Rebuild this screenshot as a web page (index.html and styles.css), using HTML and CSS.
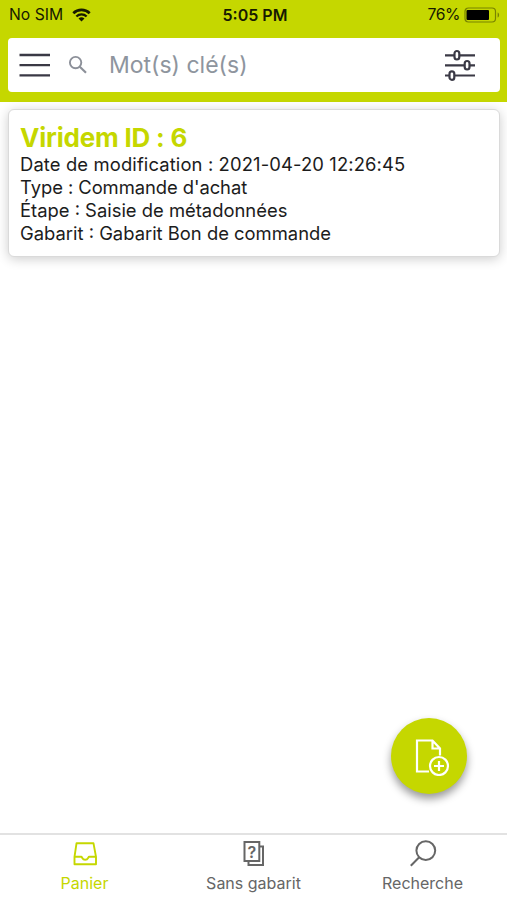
FILE: index.html
```html
<!DOCTYPE html>
<html lang="fr">
<head>
    <meta charset="utf-8">
    <meta name="viewport" content="width=device-width, initial-scale=1">
    <title>Viridem</title>
    <link rel="stylesheet" href="styles.css">
</head>
<body>
    <header class="header">
        <div class="status">
            <div class="status-left">
                <span class="carrier">No SIM</span>
                <svg class="wifi" width="19" height="14" viewBox="0 0 19 14">
                    <path d="M1.3 5.2a11.8 11.8 0 0 1 16.4 0" fill="none" stroke="#171a00" stroke-width="2.7"/>
                    <path d="M4.4 8.5a7.3 7.3 0 0 1 10.2 0" fill="none" stroke="#171a00" stroke-width="2.4"/>
                    <path d="M6.5 10.6a4.3 4.3 0 0 1 6 0l-3 3z" fill="#171a00"/>
                </svg>
            </div>
            <span class="time">5:05 PM</span>
            <div class="status-right">
                <span class="percent">76%</span>
                <svg class="battery" width="37" height="16" viewBox="0 0 37 16">
                    <rect x="1" y="1" width="30.5" height="14" rx="3.5" fill="none" stroke="#788300" stroke-width="1.2"/>
                    <rect x="2.500" y="3" width="22.500" height="10" rx="1" fill="#000"/>
                    <path d="M33.6 5.5c2 .5 2 4.5 0 5z" fill="#788300"/>
                </svg>
            </div>
        </div>
        <div class="search-bar">
            <svg class="menu-icon" width="32" height="26" viewBox="0 0 32 26">
                <path d="M.5 3h30.500M.5 13.200h30.500M.5 23.300h30.500" stroke="#3a3945" stroke-width="2.300"/>
            </svg>
            <svg class="search-icon" width="20" height="20" viewBox="0 0 20 20" fill="none" stroke="#8c9099">
                <circle cx="7.600" cy="7.600" r="5.700" stroke-width="1.900"/>
                <path d="M11.800 11.800l6.200 5.900" stroke-width="2.200"/>
            </svg>
            <input class="search-input" type="text" placeholder="Mot(s) clé(s)">
            <svg class="filter-icon" width="32" height="32" viewBox="0 0 32 32" stroke="#3a3945" stroke-width="2.200">
                <path d="M1 6.300h30M1 16.300h30M1 26.500h30"/>
                <g fill="#fff">
                    <rect x="10.500" y="2" width="4.800" height="8.500" rx="2.400"/>
                    <rect x="20.700" y="12" width="4.800" height="8.500" rx="2.400"/>
                    <rect x="5.500" y="22.300" width="4.800" height="8.500" rx="2.400"/>
                </g>
            </svg>
        </div>
    </header>

    <main class="content">
        <article class="card">
            <h2 class="card-title">Viridem ID : 6</h2>
            <p class="line-date">Date de modification : 2021-04-20 12:26:45</p>
            <p class="line-type">Type : Commande d'achat</p>
            <p class="line-step">Étape : Saisie de métadonnées</p>
            <p class="line-template">Gabarit : Gabarit Bon de commande</p>
        </article>
    </main>

    <button class="add-button" aria-label="Ajouter">
        <svg width="36" height="38" viewBox="0 0 36 38" fill="none" stroke="#fff" stroke-width="2.200">
            <path d="M15 33.500H3V2.500h15.500l7.500 8v7M18.500 2.500v8H26"/>
            <circle cx="25" cy="28" r="9" fill="#c5d700"/>
            <path d="M25 23v10M20 28h10"/>
        </svg>
    </button>

    <nav class="tabs">
        <a class="tab active">
            <svg width="28" height="28" viewBox="0 0 28 28" fill="none" stroke="currentColor" stroke-width="1.900" stroke-linejoin="round">
                <path d="M5.500 4.300h17l2.500 13.500v7.500H3.500v-7.500z"/>
                <path d="M3.500 17.800h6.800c1 0 .8 3 3.900 3s2.900-3 3.900-3H25"/>
            </svg>
            <span class="label">Panier</span>
        </a>
        <a class="tab">
            <svg width="28" height="28" viewBox="0 0 28 28" fill="none" stroke="currentColor" stroke-width="2">
                <path d="M19.500 7.500H23v18.500H8.500v-4"/>
                <rect x="4.500" y="3" width="14.800" height="19"/>
                <text class="question" x="11.900" y="18.500" text-anchor="middle">?</text>
            </svg>
            <span class="label">Sans gabarit</span>
        </a>
        <a class="tab">
            <svg width="28" height="28" viewBox="0 0 28 28" fill="none" stroke="currentColor" stroke-width="2">
                <circle cx="16.800" cy="11.600" r="9.400"/>
                <path d="M10.200 18.300L1.800 26.800"/>
            </svg>
            <span class="label">Recherche</span>
        </a>
    </nav>
</body>
</html>
```
FILE: styles.css
```css
* {
    box-sizing: border-box;
}

body {
    margin: 0;
    height: 100vh;
    display: flex;
    flex-direction: column;
    background-color: #fff;
    font-family: Inter, "Liberation Sans", sans-serif;
    color: #1c1c1c;
    overflow: hidden;
}

/* Status bar and search */
.header {
    height: 102px;
    padding: 0 7px 0 8px;
    background-color: #c5d700;
}

.status {
    height: 38px;
    padding-bottom: 9px;
    display: grid;
    grid-template-columns: 1fr auto 1fr;
    align-items: center;
    font-size: 16px;
    color: #171a00;
}

.status-left,
.status-right {
    display: flex;
    align-items: center;
}

.status-left {
    gap: 9px;
    padding-left: 1px;
}

.carrier,
.percent {
    font-size: 15.7px;
}

.percent {
    letter-spacing: -0.4px;
}

.status-right {
    justify-content: flex-end;
    gap: 4px;
    margin-right: -1px;
}

.time {
    padding-left: 2px;
    font-weight: 600;
}

.search-bar {
    height: 54px;
    display: flex;
    align-items: center;
    padding: 0 24px 0 11px;
    background-color: #fff;
    border-radius: 4px;
}

.search-icon {
    margin-left: 17px;
}

.search-input {
    flex: 1;
    min-width: 0;
    margin-left: 21px;
    padding: 0;
    border: 0;
    outline: 0;
    background: none;
    font-family: inherit;
    font-size: 23px;
}

.search-input::placeholder {
    color: #8e959e;
    opacity: 1;
}

/* Basket items */
.content {
    flex: 1;
    padding: 7px 7px 0 8px;
}

.card {
    height: 148px;
    padding: 13px 11px;
    border: 1px solid #dadada;
    border-radius: 6px;
    background-color: #fff;
    box-shadow: 0 2px 12px rgba(0,0,0,0.2);
    font-size: 18.4px;
    line-height: 23px;
}

.card-title {
    margin: 0;
    font-size: 26px;
    line-height: 30px;
    font-weight: 700;
    letter-spacing: -0.2px;
    color: #c5d700;
}

.card p {
    margin: 0;
}

.card .line-date {
    letter-spacing: 0.13px;
}

.card .line-type {
    letter-spacing: -0.06px;
}

/* Floating button above the list */
.add-button {
    position: absolute;
    right: 40px;
    bottom: 106px;
    width: 76px;
    height: 76px;
    padding: 1px 0 0 6px;
    display: flex;
    align-items: center;
    justify-content: center;
    border: 0;
    border-radius: 50%;
    background-color: #c5d700;
    box-shadow: 0 5px 8px rgba(0,0,0,0.4);
}

/* Bottom tabs */
.tabs {
    height: 67px;
    display: grid;
    grid-template-columns: repeat(3, 1fr);
    border-top: 2px solid #e2e2e2;
}

.tab {
    display: flex;
    flex-direction: column;
    align-items: center;
    padding-top: 4px;
    color: #666;
}

.tab.active {
    color: #c5d700;
}

.label {
    margin-top: 6px;
    font-size: 16px;
    line-height: 20px;
}

.question {
    fill: currentColor;
    stroke: none;
    font-size: 16px;
    font-weight: 600;
}
```
